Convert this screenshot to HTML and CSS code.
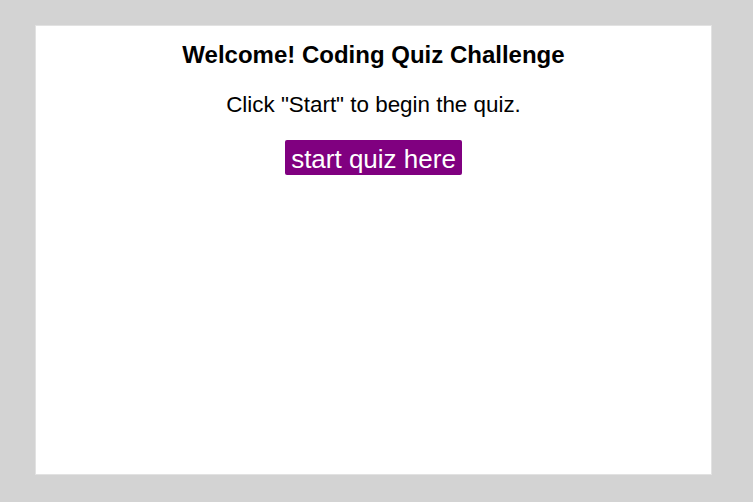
FILE: index.html
```html
<!DOCTYPE html>
<html>
<head>
<meta charset="utf-8">
<link rel="stylesheet" href="styles.css">
</head>
<body>
<main class="card">
  <h1 class="title">Welcome! Coding Quiz Challenge</h1>
  <p class="intro">Click "Start" to begin the quiz.</p>
  <button class="start">start quiz here</button>
</main>
</body>
</html>
```
FILE: styles.css
```css
html, body {
  margin: 0;
  padding: 0;
}
body {
  background: #d3d3d3;
  font-family: "Liberation Sans", Arial, sans-serif;
  padding: 25px 0 0 35px;
  height: 502px;
  box-sizing: border-box;
}
.card {
  width: 675px;
  height: 448px;
  background: #fff;
  border: 1px solid #e2e2e2;
  display: flex;
  flex-direction: column;
  align-items: center;
}
.title {
  font-size: 24px;
  font-weight: bold;
  margin: 15px 0 0;
  line-height: 28px;
}
.intro {
  font-size: 22.4px;
  margin: 23px 0 0;
  line-height: 25px;
}
.start {
  margin-top: 23px;
  background: #800080;
  color: #fff;
  border: none;
  border-radius: 2px;
  font-family: "Liberation Sans", Arial, sans-serif;
  font-size: 26px;
  padding: 4px 6px 1px;
  line-height: 30px;
}
```
